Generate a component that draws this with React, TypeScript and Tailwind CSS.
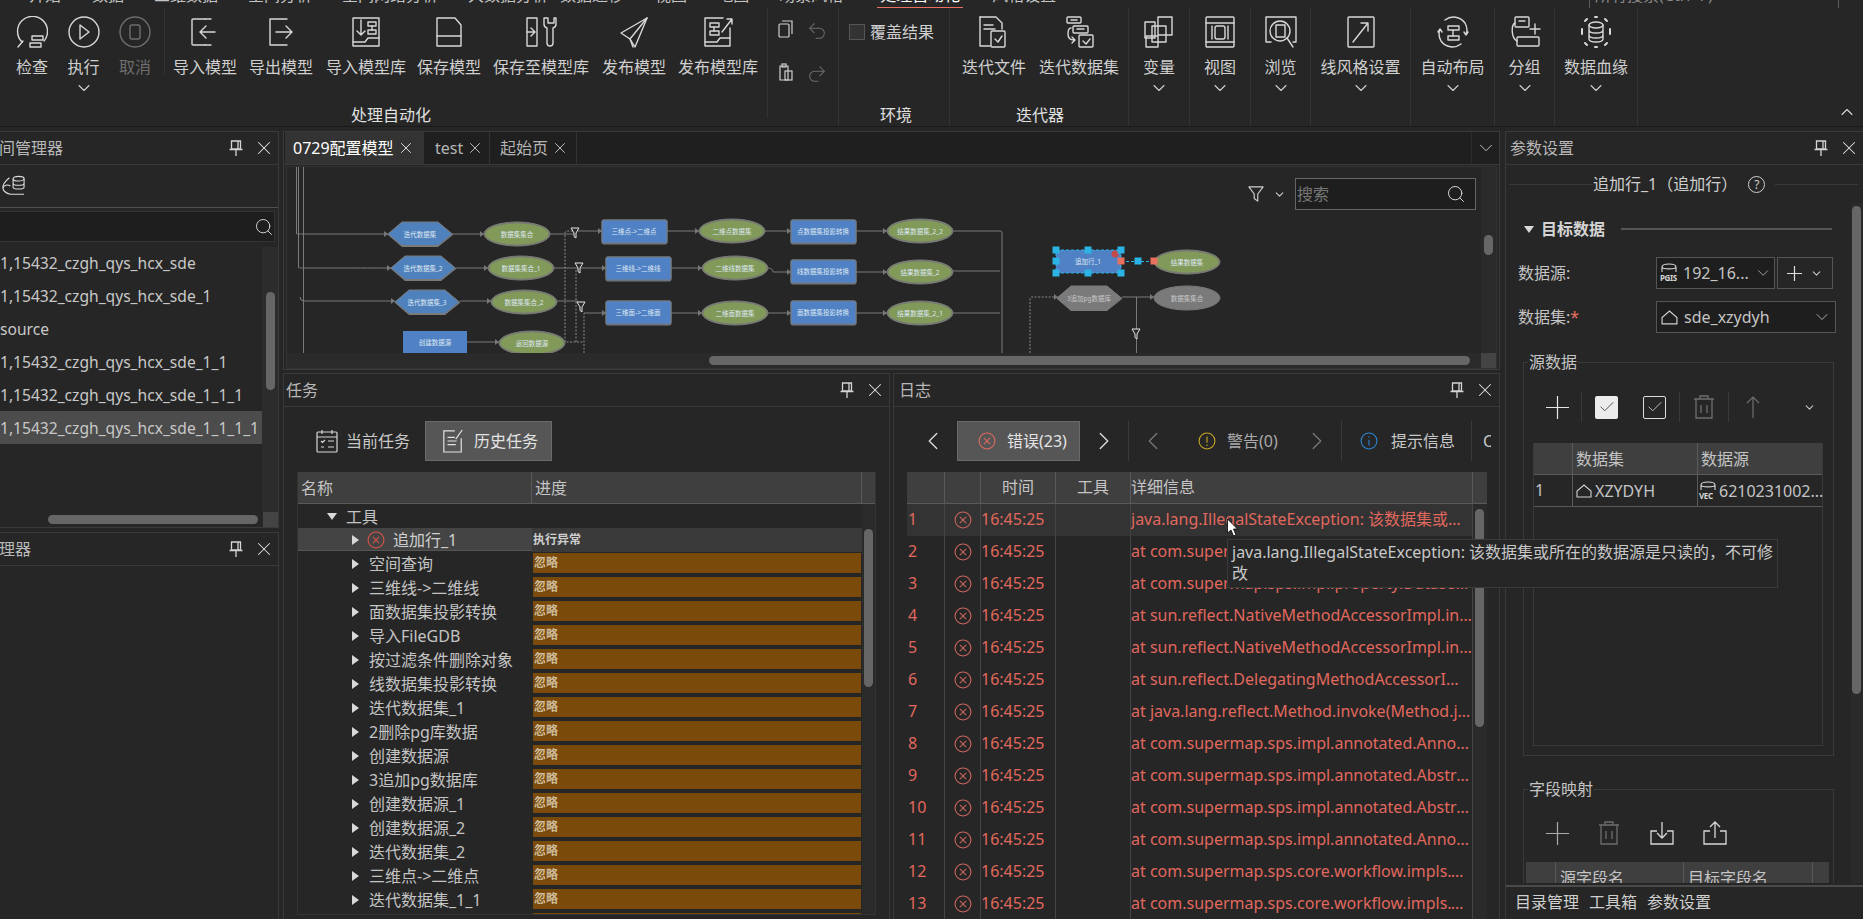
import React from 'react';
import { X, ChevronDown, ChevronLeft, ChevronRight, ChevronUp, Search, Check, Undo2, Redo2 } from 'lucide-react';

const Ico = ({ children, dim }: { children: React.ReactNode; dim?: boolean }) => (
  <svg viewBox="0 0 32 32" width="32" height="32" fill="none" stroke="currentColor" strokeWidth="1.4" strokeLinecap="round" strokeLinejoin="round" className={dim ? 'text-[#6e6e6e]' : 'text-[#d8d8d8]'}>
    {children}
  </svg>
);

const Icons = {
  Inspect: () => <Ico><path d="M6 26A15 15 0 1 1 28 25" /><path d="M7 25l-5 6" /><rect x="16" y="20" width="11" height="4" /><rect x="14" y="27" width="11" height="4" /></Ico>,
  Play: () => <Ico><circle cx="16" cy="16" r="15" /><path d="M12 9l9 7-9 7z" /></Ico>,
  Cancel: () => <Ico dim><circle cx="16" cy="16" r="15" /><rect x="11" y="9" width="10" height="14" rx="2" /></Ico>,
  ImportM: () => <Ico><path d="M16 3H4a1 1 0 0 0-1 1v24a1 1 0 0 0 1 1h12" /><path d="M16 3h6M16 29h6" /><path d="M26 16H12M17 10l-6 6 6 6" /></Ico>,
  ExportM: () => <Ico><path d="M22 3H5v26h17" /><path d="M11 16h15M21 10l6 6-6 6" /></Ico>,
  ImportLib: () => <Ico><path d="M3 2h26v28H3z" /><path d="M3 26h12l3-4h11" /><path d="M11 4v15M7 15l4 4 4-4" /><rect x="18" y="6" width="8" height="4" /><rect x="18" y="14" width="8" height="4" /><path d="M22 10v4" /></Ico>,
  Save: () => <Ico><path d="M4 2h18l6 7v21H4z" /><path d="M4 20h24" /></Ico>,
  SaveLib: () => <Ico><path d="M2 2h10v28H2z" /><path d="M2 16h7M6 12l4 4-4 4" /><path d="M19 2v6a4 4 0 0 0 3 4v15a3 3 0 0 0 6 0V12a4 4 0 0 0 3-4V2l-2 0v5h-6V2z" /></Ico>,
  Publish: () => <Ico><path d="M29 2L3 17l9 6 5 8z" /><path d="M29 2L12 23l3 8" /></Ico>,
  PublishLib: () => <Ico><path d="M28 12v18H3V2h18" /><path d="M3 26h12l3-4h10" /><rect x="8" y="7" width="9" height="4" /><rect x="8" y="15" width="9" height="4" /><path d="M12 11v4M20 16L30 3M25 3h5v5" /></Ico>,
  Copy: () => <svg viewBox="0 0 18 18" width="18" height="18" fill="none" stroke="#cfcfcf" strokeWidth="1.2"><rect x="2" y="4" width="10" height="13" rx="1" /><path d="M5 1h10v13" /></svg>,
  Paste: () => <svg viewBox="0 0 18 18" width="18" height="18" fill="none" stroke="#cfcfcf" strokeWidth="1.2"><path d="M3 3h8v14H3z" /><rect x="5" y="1" width="4" height="3" /><rect x="8" y="8" width="7" height="9" /></svg>,
  IterFile: () => <Ico><path d="M2 1h16l6 6v6" /><path d="M2 1v29h10" /><path d="M6 9h9M6 13h11" /><rect x="13" y="15" width="14" height="16" rx="1" /><path d="M17 23l3 3 4-6" /></Ico>,
  IterData: () => <Ico><rect x="4" y="1" width="14" height="6" rx="1" /><path d="M8 4h6" /><rect x="10" y="10" width="15" height="7" rx="1" /><path d="M14 13h7" /><path d="M8 12c-2 0-3 2-3 6 0 4 2 6 6 6M9 21l3 3-3 3" /><rect x="16" y="19" width="14" height="12" rx="1" /><path d="M20 25l3 3 4-5" /></Ico>,
  Variable: () => <Ico><rect x="15" y="1" width="14" height="18" /><rect x="2" y="6" width="10" height="16" /><rect x="3" y="20" width="12" height="11" /><rect x="9" y="10" width="14" height="16" /></Ico>,
  View: () => <Ico><rect x="2" y="1" width="28" height="30" rx="1" /><path d="M2 7h28M2 26h28" /><rect x="11" y="10" width="10" height="13" rx="2" /><path d="M8 10v13M24 10v13" /></Ico>,
  Browse: () => <Ico><path d="M6 26H1V1h30v25h-3" /><circle cx="15" cy="15" r="10" /><path d="M22 22l6 9" /><path d="M11 9h9v12h-9z" /></Ico>,
  LineStyle: () => <Ico><rect x="3" y="1" width="26" height="30" rx="1" /><path d="M8 26L23 7M16 7h7v8" /></Ico>,
  AutoLayout: () => <Ico><rect x="11" y="10" width="11" height="4" /><rect x="11" y="20" width="11" height="4" /><path d="M16 14v6" /><path d="M8 4a14 14 0 0 1 20 3 14 14 0 0 1 1 12M27 16l2 3 2-3" /><path d="M24 28A14 14 0 0 1 4 25a14 14 0 0 1-1-12M5 16l-2-3-2 3" /></Ico>,
  Group: () => <Ico><rect x="6" y="1" width="14" height="10" rx="1" /><path d="M10 5h6" /><path d="M6 7C2 9 2 22 8 25" /><rect x="8" y="21" width="22" height="9" rx="1" /><path d="M26 8v10M21 13h10" /></Ico>,
  Lineage: () => <Ico><ellipse cx="16" cy="9" rx="7" ry="3" /><path d="M9 9v14c0 2 3 3 7 3s7-1 7-3V9M9 14c0 2 3 3 7 3s7-1 7-3M9 19c0 2 3 3 7 3s7-1 7-3" /><path d="M15 1h2M15 31h2M5 5l2-2M27 5l-2-2M2 13v5M30 13v5M5 27l2 2M27 27l-2 2" strokeWidth="2" /></Ico>,
  Pin: () => <svg viewBox="0 0 14 16" width="14" height="16" fill="none" stroke="#d4d4d4" strokeWidth="1.3"><path d="M2.500 1h9v8h-9zM9 1v8M0.500 9.500h13M7 10v6" /></svg>,
  CircleX: ({ c, s }: { c: string; s: number }) => <svg viewBox="0 0 20 20" width={s} height={s} fill="none" stroke={c} strokeWidth="1.2"><circle cx="10" cy="10" r="8.800" /><path d="M6.500 6.500l7 7M13.500 6.500l-7 7" /></svg>,
  Warn: () => <svg viewBox="0 0 20 20" width="18" height="18" fill="none" stroke="#c9a724" strokeWidth="1.2"><circle cx="10" cy="10" r="8.800" /><path d="M10 5v7M10 14v1.500" /></svg>,
  Info: () => <svg viewBox="0 0 20 20" width="18" height="18" fill="none" stroke="#2b86d1" strokeWidth="1.2"><circle cx="10" cy="10" r="8.800" /><path d="M10 5v1.500M10 8.500V15" /></svg>,
  Shape: ({ s = 16 }: { s?: number }) => <svg viewBox="0 0 16 16" width={s} height={s} fill="none" stroke="#d0d0d0" strokeWidth="1.1"><path d="M1 14V8l7-6 7 6v6z" /></svg>,
  Filter: () => <svg viewBox="0 0 18 20" width="16" height="18" fill="none" stroke="#cfcfcf" strokeWidth="1.3" strokeLinejoin="round"><path d="M1 2h16l-6 8v8l-4-3v-5z" /></svg>,
  Trash: ({ c }: { c: string }) => <svg viewBox="0 0 22 24" width="22" height="24" fill="none" stroke={c} strokeWidth="1.3"><path d="M1 4h20M7 4V1h8v3M3 4v19h16V4M8 10v8M14 10v8" /></svg>,
  Tasks: () => <svg viewBox="0 0 22 24" width="22" height="24" fill="none" stroke="#d6d6d6" strokeWidth="1.2"><rect x="1" y="3" width="20" height="20" rx="1" /><path d="M1 8h20M6 1v4M16 1v4M5 12l1.500 1.500L9 11M12 12h6M5 18h3M12 18h6" /></svg>,
  History: () => <svg viewBox="0 0 24 26" width="22" height="24" fill="none" stroke="#e2e2e2" strokeWidth="1.3"><path d="M14 2H2v23h19V10" /><path d="M6 9h8M6 13h10M6 17h9M15 11l7-10" /></svg>,
  Export: () => <svg viewBox="0 0 24 24" width="24" height="24" fill="none" stroke="#d8d8d8" strokeWidth="1.3"><path d="M7 10H1v13h22V10h-6M12 17V1M7 6l5-5 5 5" /></svg>,
  Import: () => <svg viewBox="0 0 24 24" width="24" height="24" fill="none" stroke="#d8d8d8" strokeWidth="1.3"><path d="M7 10H1v13h22V10h-6M12 1v16M7 12l5 5 5-5" /></svg>,
  Cursor: () => <svg viewBox="0 0 12 19" width="13" height="19"><path d="M1 1v14l3.500-3 2.500 6 2.500-1-2.500-6H11z" fill="#fff" stroke="#000" strokeWidth="0.8" /></svg>,
  Plus: ({ s, c }: { s: number; c: string }) => <svg viewBox="0 0 24 24" width={s} height={s} fill="none" stroke={c} strokeWidth={24 / s * 1.2}><path d="M12 0v24M0 12h24" /></svg>,
  Up: () => <svg viewBox="0 0 14 22" width="14" height="22" fill="none" stroke="#6e6e6e" strokeWidth="1.2"><path d="M7 1v21M1 7l6-6 6 6" /></svg>,
};

const Db = ({ tag }: { tag: string }) => (
  <span className="relative inline-block w-[18px] h-[20px] shrink-0">
    <svg viewBox="0 0 18 10" width="18" height="10" fill="none" stroke="#d6d6d6" strokeWidth="1.1" className="block"><path d="M2 9V4c0-4 14-4 14 0v5M2 4c0 2.500 14 2.500 14 0" /></svg>
    <span className="block text-[8px] leading-[9px] font-bold text-[#d6d6d6] tracking-tighter">{tag}</span>
  </span>
);

const RibbonItem = ({ w, label, icon, arrow, dim }: { w: string; label: string; icon: React.ReactNode; arrow?: boolean; dim?: boolean }) => (
  <div className={`${w} shrink-0 flex flex-col items-center pt-[8px]`}>
    <div className="h-[32px]">{icon}</div>
    <div className={`mt-[9px] leading-[20px] whitespace-nowrap ${dim ? 'text-[#6e6e6e]' : 'text-[#cfcfcf]'}`}>{label}</div>
    {arrow && <ChevronDown size={20} strokeWidth={1.3} className="mt-[1px] text-[#d0d0d0]" />}
  </div>
);

const Ribbon = () => (
  <div className="h-[119px] flex shrink-0 border-b border-[#1a1a1a] text-[16px]">
    <div className="w-[839px] shrink-0 border-r border-[#333] flex flex-col">
      <div className="h-[92px] flex">
        <div className="w-[165px] shrink-0 pl-[6px] flex border-r border-[#333] h-[66px] items-start">
          <RibbonItem w="w-[52px]" label="检查" icon={<Icons.Inspect />} />
          <RibbonItem w="w-[51px]" label="执行" icon={<Icons.Play />} arrow />
          <RibbonItem w="w-[52px]" label="取消" icon={<Icons.Cancel />} dim />
        </div>
        <div className="w-[602px] shrink-0 pl-[5px] flex h-[66px] items-start">
          <RibbonItem w="w-[70px]" label="导入模型" icon={<Icons.ImportM />} />
          <RibbonItem w="w-[82px]" label="导出模型" icon={<Icons.ExportM />} />
          <RibbonItem w="w-[88px]" label="导入模型库" icon={<Icons.ImportLib />} />
          <RibbonItem w="w-[78px]" label="保存模型" icon={<Icons.Save />} />
          <RibbonItem w="w-[106px]" label="保存至模型库" icon={<Icons.SaveLib />} />
          <RibbonItem w="w-[80px]" label="发布模型" icon={<Icons.Publish />} />
          <RibbonItem w="w-[88px]" label="发布模型库" icon={<Icons.PublishLib />} />
        </div>
        <div className="flex-1 border-l border-[#333] h-[110px] grid grid-cols-2 content-start pt-[12px] px-[9px] gap-y-[21px]">
          <Icons.Copy />
          <Undo2 size={22} strokeWidth={1.1} className="text-[#6e6e6e] ml-[3px]" />
          <Icons.Paste />
          <Redo2 size={22} strokeWidth={1.1} className="text-[#6e6e6e] ml-[3px]" />
        </div>
      </div>
      <div className="pl-[351px] leading-[20px] mt-[5px] text-[#e0e0e0]">处理自动化</div>
    </div>
    <div className="w-[111px] shrink-0 border-r border-[#333] flex flex-col">
      <div className="h-[92px] flex items-start pt-[14px] pl-[10px] gap-[5px] text-[#cfcfcf]">
        <span className="w-[16px] h-[16px] mt-[2px] border border-[#555] bg-[#333]" />
        <span className="leading-[20px]">覆盖结果</span>
      </div>
      <div className="pl-[41px] leading-[20px] mt-[5px] text-[#e0e0e0]">环境</div>
    </div>
    <div className="w-[179px] shrink-0 border-r border-[#333] flex flex-col">
      <div className="h-[92px] flex">
        <RibbonItem w="w-[88px]" label="迭代文件" icon={<Icons.IterFile />} />
        <RibbonItem w="w-[82px]" label="迭代数据集" icon={<Icons.IterData />} />
      </div>
      <div className="pl-[66px] leading-[20px] mt-[5px] text-[#e0e0e0]">迭代器</div>
    </div>
    <div className="w-[61px] shrink-0 border-r border-[#333]"><RibbonItem w="w-full" label="变量" icon={<Icons.Variable />} arrow /></div>
    <div className="w-[61px] shrink-0 border-r border-[#333]"><RibbonItem w="w-full" label="视图" icon={<Icons.View />} arrow /></div>
    <div className="w-[60px] shrink-0 border-r border-[#333]"><RibbonItem w="w-full" label="浏览" icon={<Icons.Browse />} arrow /></div>
    <div className="w-[100px] shrink-0 border-r border-[#333]"><RibbonItem w="w-full" label="线风格设置" icon={<Icons.LineStyle />} arrow /></div>
    <div className="w-[84px] shrink-0 border-r border-[#333]"><RibbonItem w="w-full" label="自动布局" icon={<Icons.AutoLayout />} arrow /></div>
    <div className="w-[60px] shrink-0 border-r border-[#333]"><RibbonItem w="w-full" label="分组" icon={<Icons.Group />} arrow /></div>
    <div className="w-[83px] shrink-0 border-r border-[#333]"><RibbonItem w="w-full" label="数据血缘" icon={<Icons.Lineage />} arrow /></div>
    <div className="flex-1 flex justify-end items-end pr-[6px] pb-[4px]"><ChevronUp size={20} strokeWidth={1.3} className="text-[#d8d8d8]" /></div>
  </div>
);

const TopTabs = () => (
  <div className="h-[8px] shrink-0 overflow-hidden flex text-[16px] leading-[20px] text-[#c4c4c4] relative">
    <div className="flex -mt-[15px] whitespace-nowrap">
      <span className="ml-[29px]">开始</span>
      <span className="ml-[31px]">数据</span>
      <span className="ml-[30px]">三维数据</span>
      <span className="ml-[30px]">空间分析</span>
      <span className="ml-[30px]">空间网络分析</span>
      <span className="ml-[30px]">大数据分析</span>
      <span className="ml-[12px]">数据迁移</span>
      <span className="ml-[31px]">视图</span>
      <span className="ml-[30px]">地图</span>
      <span className="ml-[30px]">场景风格</span>
      <span className="ml-[34px] pb-[2px] text-white border-b-2 border-[#e8705f] h-[24px] px-[3px]">处理自动化</span>
      <span className="ml-[29px]">风格设置</span>
    </div>
    <div className="ml-auto mr-[24px] w-[250px] h-[9px] border border-t-0 border-[#5c5c5c] overflow-hidden">
      <div className="-mt-[15px] pl-[5px] text-[#8a8a8a]">所有搜索(Ctrl+F)</div>
    </div>
  </div>
);

const PanelHeader = ({ title, offset }: { title: string; offset?: string }) => (
  <div className="h-[33px] shrink-0 flex items-center border-b border-[#3a3a3a] text-[#b8b8b8] pr-[3px]">
    <span className={`flex-1 whitespace-nowrap overflow-hidden leading-[20px] ${offset ?? 'pl-[4px]'}`}>{title}</span>
    <Icons.Pin />
    <X size={22} strokeWidth={1.1} className="ml-[10px] text-[#e0e0e0]" />
  </div>
);

const LeftPanel = () => {
  const rows = ['1,15432_czgh_qys_hcx_sde', '1,15432_czgh_qys_hcx_sde_1', 'source', '1,15432_czgh_qys_hcx_sde_1_1', '1,15432_czgh_qys_hcx_sde_1_1_1', '1,15432_czgh_qys_hcx_sde_1_1_1_1'];
  return (
    <div className="w-[279px] shrink-0 flex flex-col gap-[4px]">
      <div className="h-[397px] border-r border-y border-[#3a3a3a] flex flex-col">
        <PanelHeader title="间管理器" offset="-ml-[1px]" />
        <div className="h-[43px] shrink-0 border-b border-[#505050] flex items-center pl-[1px]">
          <svg viewBox="0 0 28 24" width="26" height="22" fill="none" stroke="#dcdcdc" strokeWidth="1.2"><path d="M9 3C4 7 1 11 2 15c1 4 4 5 8 6h15" /><path d="M2 14c1-3 5-4 8-2" /><ellipse cx="19" cy="4" rx="6" ry="2.500" /><path d="M13 4v9c0 3 12 3 12 0V4M13 9c0 3 12 3 12 0" /></svg>
        </div>
        <div className="h-[31px] mt-[3px] shrink-0 mr-[3px] bg-[#1e1e1e] border border-l-0 border-[#333] flex items-center justify-end">
          <Search size={20} strokeWidth={1.2} className="text-[#d0d0d0]" />
        </div>
        <div className="flex-1 min-h-0 flex pt-[4px]">
          <div className="w-[262px] shrink-0 overflow-hidden text-[15.6px]">
            {rows.map((r, i) => (
              <div key={r} className={`h-[33px] flex items-center whitespace-nowrap text-[#c8c8c8] ${i === 5 ? 'bg-[#4c4c4c]' : ''}`}>{r}</div>
            ))}
          </div>
          <div className="flex-1 bg-[#2c2c2c] pl-[4px] mt-[1px]"><div className="w-[9px] h-[98px] mt-[45px] rounded-full bg-[#666]" /></div>
        </div>
        <div className="h-[15px] shrink-0 flex items-center">
          <div className="ml-[48px] w-[210px] h-[9px] rounded-full bg-[#666]" />
          <div className="ml-auto w-[15px] h-[15px] bg-[#444]" />
        </div>
      </div>
      <div className="flex-1 border-r border-t border-[#3a3a3a]">
        <PanelHeader title="理器" offset="-ml-[1px]" />
      </div>
    </div>
  );
};

const Arrow = ({ x, y }: { x: number; y: number }) => <path d={`M${x - 4} ${y - 3}L${x} ${y}L${x - 4} ${y + 3}z`} fill="#777" stroke="none" />;

const Funnel = ({ x, y }: { x: number; y: number }) => <path d={`M${x - 4} ${y - 5}h8l-3 5v5l-2-1.500v-3.500z`} fill="#2a2a2a" stroke="#e6e6e6" strokeWidth="1" />;

const Label = ({ x, y, t, c = '#dfe8f2' }: { x: number; y: number; t: string; c?: string }) => <text x={x} y={y + 2.500} textAnchor="middle" fontSize="6.500" fill={c} stroke="none">{t}</text>;

const Hex = ({ x, y, t, fill = '#4f81bd', shadow = '#3a6494', c }: { x: number; y: number; t: string; fill?: string; shadow?: string; c?: string }) => (
  <g>
    <path d={`M${x} ${y + 12.500}l14 -12h36l15 12l-15 12h-36z`} fill={shadow} />
    <path d={`M${x} ${y + 12}l14 -12h36l14 12l-14 11.500h-36z`} fill={fill} />
    <Label x={x + 32} y={y + 12} t={t} c={c} />
  </g>
);

const Ell = ({ x, y, t, fill = '#819a5a', shadow = '#6f9040', c }: { x: number; y: number; t: string; fill?: string; shadow?: string; c?: string }) => (
  <g>
    <ellipse cx={x + 33} cy={y + 12} rx="33" ry="12" fill={shadow} />
    <ellipse cx={x + 33} cy={y + 12} rx="32" ry="11" fill={fill} />
    <Label x={x + 33} y={y + 12} t={t} c={c} />
  </g>
);

const Box = ({ x, y, t }: { x: number; y: number; t: string }) => (
  <g>
    <rect x={x} y={y} width="65" height="24" rx="1.500" fill="#3b6595" />
    <rect x={x} y={y} width="65" height="23" rx="1.500" fill="#4f81c4" />
    <Label x={x + 32} y={y + 11} t={t} />
  </g>
);

const Handle = ({ x, y, c = '#2bb3e6' }: { x: number; y: number; c?: string }) => <rect x={x - 3.500} y={y - 3.500} width="7" height="7" fill={c} stroke="none" />;

const Diagram = () => (
  <svg viewBox="287 166 1195 186" width="1195" height="186" className="block" fill="none" stroke="#7a7a7a" strokeWidth="1">
    <path d="M296.500 166v67M298.500 166v101M303.500 166v186" />
    <path d="M297 233h91M299 267c0 0 0 0 92 0M300 296q0 4 4 4h91" />
    <path d="M452 233h32M456 267h32M460 300h31M467 341h32" />
    <path d="M550 233h23M578 230h24M553 267h53M556 300h22M584 312h22" />
    <path d="M667 230h32M764 230h27M671 267h31M767 267q6 0 6 4h18M671 312h31M767 312h24M856 230h31M856 271h31M856 312h31" />
    <path d="M953 230h47q2 0 2 2v120M953 270h47M953 312h47" />
    <path d="M563 341h21M565 341V232q0-2 2-2h6M576 341V269M584 352V312" strokeDasharray="2 1.500" stroke="#8a8a8a" />
    {[[388, 233], [391, 267], [395, 300], [484, 233], [488, 267], [491, 300], [499, 341], [602, 230], [606, 267], [606, 312], [699, 230], [702, 267], [702, 312], [791, 230], [791, 271], [791, 312], [887, 230], [887, 271], [887, 312]].map(([x, y]) => <Arrow key={`${x}-${y}`} x={x} y={y} />)}
    <Hex x={388} y={221} t="迭代数据集" />
    <Ell x={484} y={221} t="数据集集合" />
    <Box x={602} y={219} t="三维点->二维点" />
    <Ell x={699} y={218} t="二维点数据集" />
    <Box x={791} y={219} t="点数据集投影转换" />
    <Ell x={887} y={218} t="结果数据集_2_2" />
    <Hex x={391} y={255} t="迭代数据集_2" />
    <Ell x={488} y={255} t="数据集集合_1" />
    <Box x={606} y={256} t="三维线->二维线" />
    <Ell x={702} y={255} t="二维线数据集" />
    <Box x={791} y={259} t="线数据集投影转换" />
    <Ell x={887} y={259} t="结果数据集_2" />
    <Hex x={395} y={289} t="迭代数据集_3" />
    <Ell x={491} y={289} t="数据集集合_2" />
    <Box x={606} y={300} t="三维面->二维面" />
    <Ell x={702} y={300} t="二维面数据集" />
    <Box x={791} y={300} t="面数据集投影转换" />
    <Ell x={887} y={300} t="结果数据集_2_1" />
    <rect x={403} y={330} width="64" height="24" fill="#4f81c4" stroke="none" />
    <Label x={435} y={341} t="创建数据源" />
    <Ell x={499} y={330} t="返回数据源" />
    <Funnel x={575} y={232} />
    <Funnel x={579} y={267} />
    <Funnel x={581} y={306} />
    <path d="M1122 296h32M1136.500 296v56" />
    <path d="M1030 352v-54q0-2 2-2h25" strokeDasharray="2 1.500" stroke="#8a8a8a" />
    <Arrow x={1058} y={296} />
    <Arrow x={1154} y={296} />
    <Hex x={1057} y={285} t="3追加pg数据库" fill="#7a7a7a" shadow="#666" c="#c8c8c8" />
    <Ell x={1154} y={285} t="数据集集合" fill="#7a7a7a" shadow="#6a6a6a" c="#c8c8c8" />
    <Funnel x={1136} y={333} />
    <Ell x={1154} y={249} t="结果数据集" />
    <rect x={1056} y={249} width="65" height="23" fill="#4f81c4" stroke="#2bb3e6" strokeDasharray="3 2" />
    <Label x={1088} y={260} t="追加行_1" />
    <path d="M1121 260.500h33" stroke="#2bb3e6" strokeDasharray="3 2" />
    <circle cx="1115" cy="253" r="3.500" fill="#c44a4a" stroke="none" />
    {[[1056, 249], [1088, 249], [1121, 249], [1056, 260], [1056, 272], [1088, 272], [1121, 272], [1138, 260]].map(([x, y]) => <Handle key={`${x}-${y}`} x={x} y={y} />)}
    <Handle x={1121} y={260} c="#e8705f" />
    <Handle x={1154} y={260} c="#e8705f" />
  </svg>
);

const CenterTop = () => (
  <div className="h-[239px] shrink-0 border border-[#3a3a3a] flex flex-col">
    <div className="h-[33px] shrink-0 bg-[#1f1f1f] flex items-stretch border-b border-[#3a3a3a] pl-[1px] text-[#b4b4b4]">
      <div className="w-[139px] bg-[#333] text-white flex items-center pl-[8px] gap-[3px]">0729配置模型<X size={18} strokeWidth={1.1} /></div>
      <div className="w-[66px] border-r border-[#333] flex items-center pl-[11px] gap-[3px]">test<X size={18} strokeWidth={1.1} className="text-[#ddd]" /></div>
      <div className="w-[87px] border-r border-[#333] flex items-center pl-[10px] gap-[3px]">起始页<X size={18} strokeWidth={1.1} className="text-[#ddd]" /></div>
      <div className="ml-auto w-[28px] border-l border-[#2c2c2c] flex items-center justify-center"><ChevronDown size={22} strokeWidth={1} className="text-[#ccc]" /></div>
    </div>
    <div className="flex-1 min-h-0 mx-[2px] mt-[1px] border border-[#333] flex flex-col relative">
      <div className="flex flex-1 min-h-0">
        <div className="flex-1 overflow-hidden"><Diagram /></div>
        <div className="w-[15px] shrink-0 bg-[#2a2a2a] pl-[3px]"><div className="w-[9px] h-[20px] mt-[68px] rounded-full bg-[#666]" /></div>
      </div>
      <div className="h-[15px] shrink-0 flex items-center bg-[#2a2a2a]">
        <div className="ml-[422px] w-[761px] h-[9px] rounded-full bg-[#666]" />
        <div className="ml-auto w-[15px] h-[15px] bg-[#444]" />
      </div>
      <div className="absolute right-[20px] top-[11px] flex items-center">
        <Icons.Filter />
        <ChevronDown size={13} strokeWidth={2} className="ml-[9px] text-[#ccc]" />
        <div className="ml-[9px] w-[181px] h-[32px] border border-[#666] bg-[#1e1e1e] flex items-center justify-between pl-[1px] pr-[9px] text-[#777]">
          搜索<Search size={20} strokeWidth={1.2} className="text-[#d8d8d8]" />
        </div>
      </div>
    </div>
  </div>
);

const taskRows = ['空间查询', '三维线->二维线', '面数据集投影转换', '导入FileGDB', '按过滤条件删除对象', '线数据集投影转换', '迭代数据集_1', '2删除pg库数据', '创建数据源', '3追加pg数据库', '创建数据源_1', '创建数据源_2', '迭代数据集_2', '三维点->二维点', '迭代数据集_1_1', '迭代数据集_3'];

const Tri = () => <span className="w-0 h-0 border-y-[5px] border-y-transparent border-l-[7px] border-l-[#d8d8d8]" />;

const TaskPanel = () => (
  <div className="w-[607px] shrink-0 border border-b-0 border-[#3a3a3a] flex flex-col">
    <PanelHeader title="任务" offset="pl-[2px]" />
    <div className="h-[40px] mt-[14px] shrink-0 flex pl-[26px]">
      <div className="w-[115px] flex items-center gap-[8px] pl-[6px] text-[#c8c8c8]"><Icons.Tasks />当前任务</div>
      <div className="w-[127px] bg-[#565656] border border-[#6a6a6a] flex items-center gap-[10px] pl-[16px] text-[#e4e4e4]"><Icons.History />历史任务</div>
    </div>
    <div className="ml-[13px] mt-[11px] mb-[4px] w-[579px] flex-1 min-h-0 border-x border-b border-[#333] flex flex-col">
      <div className="h-[32px] shrink-0 bg-[#3f3f3f] flex border-b border-[#5a5a5a] text-[#c4c4c4] leading-[32px]">
        <div className="w-[234px] pl-[3px] border-r border-[#5a5a5a]">名称</div>
        <div className="w-[330px] pl-[3px] border-r border-[#5a5a5a]">进度</div>
      </div>
      <div className="flex flex-1 min-h-0 overflow-hidden">
        <div className="w-[564px] shrink-0 text-[#c4c4c4]">
          <div className="h-[24px] flex items-center pl-[29px] gap-[9px] pt-[1px]">
            <span className="w-0 h-0 border-x-[5px] border-x-transparent border-t-[7px] border-t-[#d8d8d8]" />工具
          </div>
          <div className="h-[25px] flex">
            <div className="w-[234px] h-[23px] bg-[#444] border-b border-[#555] flex items-center pl-[54px] gap-[8px] text-[#cfcfcf] pt-[1px]"><Tri /><Icons.CircleX c="#d9534a" s={18} />追加行_1</div>
            <div className="w-[330px] h-[24px] bg-[#3a3a3a] pl-[1px] text-[12px] font-bold leading-[24px] text-[#cfcfcf]">执行异常</div>
          </div>
          {taskRows.map(r => (
            <div key={r} className="h-[24px] flex">
              <div className="w-[234px] h-[22px] flex items-center pl-[54px] gap-[10px] whitespace-nowrap">
                <Tri />{r}
              </div>
              <div className="w-[328px] ml-[1px] h-[20px] bg-[#7a4a0a] pl-[1px] text-[12px] font-bold leading-[20px] text-[#cdbb9a]">忽略</div>
            </div>
          ))}
        </div>
        <div className="flex-1 bg-[#2a2a2a] pl-[2px]"><div className="w-[9px] h-[158px] mt-[25px] rounded-full bg-[#666]" /></div>
      </div>
    </div>
  </div>
);

const logRows = [
  'java.lang.IllegalStateException: 该数据集或所在的数据源是只读的，不可修改',
  'at com.supermap.sps.impl.annotated.AbstractAnnotated',
  'at com.supermap.sps.impl.property.DatasetProperty',
  'at sun.reflect.NativeMethodAccessorImpl.invoke0(Native Method)',
  'at sun.reflect.NativeMethodAccessorImpl.invoke(Native',
  'at sun.reflect.DelegatingMethodAccessorImpl.invoke(Delegating',
  'at java.lang.reflect.Method.invoke(Method.java:498)',
  'at com.supermap.sps.impl.annotated.AnnotatedProcess.execute',
  'at com.supermap.sps.impl.annotated.AbstractAnnotatedProcess',
  'at com.supermap.sps.impl.annotated.AbstractAnnotatedProcess',
  'at com.supermap.sps.impl.annotated.AnnotatedProcess.run',
  'at com.supermap.sps.core.workflow.impls.WorkflowRunner',
  'at com.supermap.sps.core.workflow.impls.WorkflowRunner',
];

const LogPanel = () => (
  <div className="flex-1 min-w-0 border border-b-0 border-[#3a3a3a] flex flex-col">
    <PanelHeader title="日志" offset="pl-[5px]" />
    <div className="h-[40px] mt-[14px] shrink-0 flex items-stretch text-[#c8c8c8]">
      <ChevronLeft size={30} strokeWidth={1} className="self-center ml-[24px] text-[#e0e0e0]" />
      <div className="ml-[9px] w-[123px] bg-[#565656] border border-[#6a6a6a] flex items-center gap-[11px] pl-[20px] text-[#e4e4e4]"><Icons.CircleX c="#e0695f" s={18} />错误(23)</div>
      <ChevronRight size={30} strokeWidth={1} className="self-center ml-[9px] text-[#e0e0e0]" />
      <div className="ml-[9px] border-l border-[#3a3a3a]" />
      <ChevronLeft size={30} strokeWidth={1} className="self-center ml-[9px] text-[#777]" />
      <div className="w-[134px] flex items-center pl-[30px] gap-[11px] text-[#aaa]"><Icons.Warn />警告(0)</div>
      <ChevronRight size={30} strokeWidth={1} className="self-center text-[#777]" />
      <div className="ml-[9px] border-l border-[#3a3a3a]" />
      <div className="w-[129px] flex items-center pl-[18px] gap-[13px]"><Icons.Info />提示信息</div>
      <div className="border-l border-[#3a3a3a] pl-[11px] flex items-center overflow-hidden w-[20px]">C</div>
    </div>
    <div className="ml-[13px] mt-[11px] w-[580px] flex-1 min-h-0 flex flex-col">
      <div className="h-[32px] shrink-0 bg-[#3f3f3f] grid grid-cols-[38px_36px_75px_75px_342px_14px] border-b border-[#5a5a5a] text-[#c4c4c4] leading-[31px]">
        <div className="border-r border-[#5a5a5a]" />
        <div className="border-r border-[#5a5a5a]" />
        <div className="border-r border-[#5a5a5a] text-center">时间</div>
        <div className="border-r border-[#5a5a5a] text-center">工具</div>
        <div className="border-r border-[#5a5a5a]">详细信息</div>
        <div />
      </div>
      <div className="flex flex-1 min-h-0 overflow-hidden">
        <div className="w-[566px] shrink-0 text-[#e0685e]">
          {logRows.map((r, i) => (
            <div key={i} className={`h-[32px] grid grid-cols-[38px_36px_75px_75px_342px] leading-[30px] ${i === 0 ? 'bg-[#333]' : ''}`}>
              <div className="border-r border-[#454545] pl-[1px]">{i + 1}</div>
              <div className="border-r border-[#454545] flex items-center justify-center"><Icons.CircleX c="#c9655c" s={18} /></div>
              <div className="border-r border-[#454545]">16:45:25</div>
              <div className="border-r border-[#454545]" />
              <div className="border-r border-[#454545] truncate">{r}</div>
            </div>
          ))}
        </div>
        <div className="flex-1 bg-[#2a2a2a] pl-[2px]"><div className="w-[9px] h-[218px] mt-[5px] rounded-full bg-[#666]" /></div>
      </div>
    </div>
  </div>
);

const RightPanel = () => (
  <div className="w-[358px] shrink-0 border-l border-[#3a3a3a] flex flex-col overflow-hidden h-full">
    <div className="border-t border-[#3a3a3a]"><PanelHeader title="参数设置" /></div>
    <div className="h-[38px] shrink-0 flex items-center pl-[3px] pr-[5px] text-[#cfcfcf]">
      <div className="w-[84px] border-t border-[#3a3a3a]" />
      <span className="whitespace-nowrap">追加行_1（追加行）</span>
      <span className="ml-[11px] w-[17px] h-[17px] rounded-full border border-[#cfcfcf] text-[12px] leading-[15px] text-center">?</span>
      <div className="ml-[10px] flex-1 border-t border-[#3a3a3a]" />
    </div>
    <div className="h-[680px] shrink-0 flex overflow-hidden">
      <div className="w-[345px] shrink-0 overflow-hidden text-[#c4c4c4]">
        <div className="h-[24px] mt-[14px] flex items-center pl-[18px]">
          <span className="w-0 h-0 border-x-[5px] border-x-transparent border-t-[7px] border-t-[#d8d8d8]" />
          <span className="ml-[7px] font-bold text-[#d4d4d4] whitespace-nowrap">目标数据</span>
          <span className="ml-[16px] w-[211px] border-t-2 border-[#555]" />
        </div>
        <div className="h-[32px] mt-[16px] flex items-center pl-[12px]">
          <span className="w-[138px]">数据源:</span>
          <div className="w-[119px] h-[32px] border border-[#555] bg-[#1e1e1e] flex items-center pl-[3px] gap-[5px]">
            <Db tag="PGIS" />
            <span className="whitespace-nowrap">192_16...</span>
            <ChevronDown size={20} strokeWidth={1} className="ml-auto mr-[2px]" />
          </div>
          <div className="ml-[2px] w-[56px] h-[32px] border border-[#555] flex items-center justify-center gap-[8px]">
            <Icons.Plus s={15} c="#ddd" /><ChevronDown size={13} strokeWidth={2} />
          </div>
        </div>
        <div className="h-[32px] mt-[12px] flex items-center pl-[12px]">
          <span className="w-[138px]">数据集:<span className="text-[#e8705f]">*</span></span>
          <div className="w-[180px] h-[32px] border border-[#555] bg-[#1e1e1e] flex items-center pl-[4px] gap-[6px]">
            <Icons.Shape s={17} />
            <span>sde_xzydyh</span>
            <ChevronDown size={20} strokeWidth={1} className="ml-auto mr-[3px]" />
          </div>
        </div>
        <fieldset className="ml-[17px] mt-[17px] w-[311px] h-[406px] border border-[#3a3a3a]">
          <legend className="ml-[4px] px-[1px] h-[24px] leading-[24px]">源数据</legend>
          <div className="h-[32px] mt-[17px] flex items-center">
            <span className="ml-[22px]"><Icons.Plus s={23} c="#e6e6e6" /></span>
            <div className="ml-[12px] h-[30px] border-l border-[#3a3a3a]" />
            <div className="ml-[13px] w-[23px] h-[23px] rounded-[2px] bg-[#ececec] flex items-center justify-center"><Check size={18} strokeWidth={1.1} className="text-[#333]" /></div>
            <div className="ml-[25px] w-[23px] h-[23px] rounded-[2px] border border-[#ddd] flex items-center justify-center"><Check size={18} strokeWidth={1.1} className="text-[#ddd]" /></div>
            <div className="ml-[13px] h-[30px] border-l border-[#3a3a3a]" />
            <div className="ml-[13px]"><Icons.Trash c="#6e6e6e" /></div>
            <div className="ml-[13px] h-[30px] border-l border-[#3a3a3a]" />
            <div className="ml-[17px]"><Icons.Up /></div>
            <ChevronDown size={13} strokeWidth={2} className="ml-[43px]" />
          </div>
          <div className="ml-[9px] mt-[20px] w-[290px] h-[303px] border border-t-0 border-[#3a3a3a]">
            <div className="h-[32px] bg-[#3f3f3f] grid grid-cols-[39px_125px_125px] border-b border-[#5a5a5a] leading-[32px]">
              <div className="border-r border-[#5a5a5a]" />
              <div className="border-r border-[#5a5a5a] pl-[3px]">数据集</div>
              <div className="pl-[3px]">数据源</div>
            </div>
            <div className="h-[32px] grid grid-cols-[39px_125px_125px] border-b border-[#5a5a5a] items-center">
              <div className="border-r border-[#5a5a5a] h-full leading-[31px] pl-[1px]">1</div>
              <div className="border-r border-[#5a5a5a] h-full flex items-center gap-[3px] pl-[3px]"><Icons.Shape />XZYDYH</div>
              <div className="h-full flex items-center pl-[1px] gap-[2px] whitespace-nowrap overflow-hidden"><Db tag="VEC" />6210231002...</div>
            </div>
          </div>
        </fieldset>
        <fieldset className="ml-[17px] mt-[21px] w-[311px] h-[140px] border border-[#3a3a3a]">
          <legend className="ml-[4px] px-[1px] h-[24px] leading-[24px]">字段映射</legend>
          <div className="h-[32px] mt-[16px] flex items-center">
            <span className="ml-[22px]"><Icons.Plus s={23} c="#aaa" /></span>
            <div className="ml-[29px]"><Icons.Trash c="#6e6e6e" /></div>
            <div className="ml-[30px]"><Icons.Import /></div>
            <div className="ml-[29px]"><Icons.Export /></div>
          </div>
          <div className="ml-[2px] mt-[13px] w-[303px] h-[32px] bg-[#3f3f3f] grid grid-cols-[30px_128px_129px_16px] leading-[32px]">
            <div className="border-r border-[#5a5a5a]" />
            <div className="border-r border-[#5a5a5a] pl-[4px]">源字段名</div>
            <div className="border-r border-[#5a5a5a] pl-[4px]">目标字段名</div>
            <div />
          </div>
        </fieldset>
      </div>
      <div className="flex-1 bg-[#2a2a2a] pl-[1px]"><div className="w-[9px] h-[488px] mt-[3px] rounded-full bg-[#666]" /></div>
    </div>
    <div className="mt-[2px] border-t-2 border-[#4a4a4a] flex-1 flex items-center pl-[9px] gap-[10px] text-[#cfcfcf] pb-[2px]">
      <span>目录管理</span><span>工具箱</span><span>参数设置</span>
    </div>
  </div>
);

export default function App() {
  return (
    <div className="relative w-[1863px] h-[919px] overflow-hidden bg-[#262626] flex flex-col text-[16px] leading-[20px] font-['Noto_Sans','Noto_Sans_CJK_SC',sans-serif]">
      <TopTabs />
      <Ribbon />
      <div className="mt-[4px] flex-1 min-h-0 flex">
        <LeftPanel />
        <div className="ml-[4px] w-[1217px] shrink-0 flex flex-col gap-[3px]">
          <CenterTop />
          <div className="flex-1 min-h-0 flex gap-[3px]">
            <TaskPanel />
            <LogPanel />
          </div>
        </div>
        <div className="ml-[5px] flex flex-col min-h-0"><RightPanel /></div>
      </div>
      <div className="absolute left-[1227px] top-[539px] w-[551px] h-[49px] bg-[#262626] border border-[#3a3a3a] px-[4px] py-[2px] text-[#c8c8c8] leading-[21px] whitespace-nowrap">
        java.lang.IllegalStateException: 该数据集或所在的数据源是只读的，不可修<br />改
      </div>
      <div className="absolute left-[1226px] top-[518px]"><Icons.Cursor /></div>
    </div>
  );
}
